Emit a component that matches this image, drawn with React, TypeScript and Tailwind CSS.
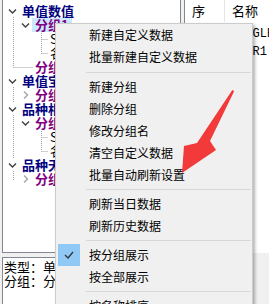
import React from "react";

const CJK = "font-['Noto_Sans_CJK_SC','Noto_Sans',sans-serif]";

function ChevDown() {
  return (
    <svg width="13" height="14" viewBox="0 0 13 14" className="shrink-0">
      <polyline points="3,5.5 6.5,9 10,5.5" fill="none" stroke="#404040" strokeWidth="1.4" />
    </svg>
  );
}

function ChevRight() {
  return (
    <svg width="13" height="14" viewBox="0 0 13 14" className="shrink-0">
      <polyline points="5,3.5 8.5,7 5,10.5" fill="none" stroke="#a6a6a6" strokeWidth="1.4" />
    </svg>
  );
}

type RowProps = {
  pad: string;
  chev?: "down" | "right";
  text: string;
  kind: "root" | "group" | "leaf";
  hl?: boolean;
};

function TreeRow({ pad, chev, text, kind, hl }: RowProps) {
  const color =
    kind === "root"
      ? "text-[#000080] font-bold text-[13px]"
      : kind === "group"
      ? "text-[#800080] font-bold text-[13px]"
      : "text-black text-[13px]";
  return (
    <div className={`flex h-[14px] items-center whitespace-nowrap ${pad}`}>
      {chev === "down" && <ChevDown />}
      {chev === "right" && <ChevRight />}
      <span className={`px-[3px] leading-[14px] ${color} ${hl ? "bg-[#cce8ff]" : ""}`}>{text}</span>
    </div>
  );
}

type MenuItem = { t?: string; sep?: string; checked?: boolean };

const items: MenuItem[] = [
  { t: "新建自定义数据" },
  { t: "批量新建自定义数据" },
  { sep: "h-[8px]" },
  { t: "新建分组" },
  { t: "删除分组" },
  { t: "修改分组名" },
  { t: "清空自定义数据" },
  { t: "批量自动刷新设置" },
  { sep: "h-[7px]" },
  { t: "刷新当日数据" },
  { t: "刷新历史数据" },
  { sep: "h-[7px]" },
  { t: "按分组展示", checked: true },
  { t: "按全部展示" },
  { sep: "h-[7px]" },
  { t: "按名称排序" },
];

export default function App() {
  return (
    <div className={`relative w-[269px] h-[304px] overflow-hidden bg-[#f0f0f0] ${CJK}`}>
      {/* top area */}
      <div className="flex h-[253px]">
        {/* tree panel */}
        <div className="ml-[2px] w-[179px] shrink-0 h-full border border-t-0 border-[#828790] bg-white pt-[4px]">
          <TreeRow pad="pl-[3px]" chev="down" text="单值数值" kind="root" />
          <TreeRow pad="pl-[16px]" chev="down" text="分组1" kind="group" hl />
          <TreeRow pad="pl-[44px]" text="SINGLE" kind="leaf" />
          <TreeRow pad="pl-[44px]" text="名称" kind="leaf" />
          <TreeRow pad="pl-[29px]" text="分组2" kind="group" />
          <TreeRow pad="pl-[3px]" chev="down" text="单值宝数" kind="root" />
          <TreeRow pad="pl-[16px]" chev="right" text="分组1" kind="group" />
          <TreeRow pad="pl-[3px]" chev="down" text="品种相关" kind="root" />
          <TreeRow pad="pl-[16px]" chev="down" text="分组1" kind="group" />
          <TreeRow pad="pl-[44px]" text="SINGLE" kind="leaf" />
          <TreeRow pad="pl-[44px]" text="名称" kind="leaf" />
          <TreeRow pad="pl-[3px]" chev="down" text="品种无关" kind="root" />
          <TreeRow pad="pl-[16px]" chev="right" text="分组1" kind="group" />
        </div>
        {/* table panel */}
        <div className="ml-[3px] flex-1 min-w-0 h-full overflow-hidden border-l border-[#828790] bg-white">
          <div className="flex h-[22px] text-[13px] text-black">
            <div className="w-[40px] shrink-0 border-r border-[#e5e5e5] pl-[7px] leading-[22px]">序</div>
            <div className="pl-[7px] leading-[22px] whitespace-nowrap">名称</div>
          </div>
          <div className="pt-[3px] font-['Liberation_Mono',monospace] text-[12px] text-black">
            <div className="flex h-[18px] items-center">
              <div className="w-[40px] shrink-0" />
              <div className="pl-[6px] whitespace-nowrap">SINGLEI</div>
            </div>
            <div className="flex h-[18px] items-center">
              <div className="w-[40px] shrink-0" />
              <div className="pl-[6px] whitespace-nowrap">NUMR1</div>
            </div>
          </div>
        </div>
      </div>
      {/* info panel */}
      <div className="mt-[4px] ml-[2px] w-[179px] h-[60px] border border-[#828790] bg-white pl-[1px] pt-[2px] text-[13px] leading-[14px] text-black whitespace-nowrap">
        <div>类型：单值数值</div>
        <div>分组：分组1</div>
      </div>

      {/* tree dotted lines */}
      <svg className="absolute left-0 top-0 pointer-events-none" width="180" height="200" viewBox="0 0 180 200">
        <g stroke="#a0a0a0" strokeWidth="1" strokeDasharray="1 1" fill="none">
          <line x1="13.5" y1="17" x2="13.5" y2="67.5" />
          <line x1="13.5" y1="67.5" x2="33" y2="67.5" />
          <line x1="41.5" y1="31" x2="41.5" y2="53.5" />
          <line x1="41.5" y1="39.5" x2="48" y2="39.5" />
          <line x1="41.5" y1="53.5" x2="48" y2="53.5" />
          <line x1="13.5" y1="87" x2="13.5" y2="103" />
          <line x1="13.5" y1="115" x2="13.5" y2="159" />
          <line x1="41.5" y1="129" x2="41.5" y2="151.5" />
          <line x1="41.5" y1="137.5" x2="48" y2="137.5" />
          <line x1="41.5" y1="151.5" x2="48" y2="151.5" />
          <line x1="13.5" y1="171" x2="13.5" y2="180" />
        </g>
      </svg>

      {/* context menu */}
      <div className="absolute left-[55px] top-[23px] w-[198px] border border-[#cccccc] bg-[#f0f0f0] shadow-[2px_2px_3px_rgba(0,0,0,0.3)]">
        {items.map((it, i) =>
          it.sep ? (
            <div key={i} className={`flex items-center ${it.sep}`}>
              <div className="ml-[30px] mr-[1px] h-px flex-1 bg-[#d7d7d7]" />
            </div>
          ) : (
            <div key={i} className="flex h-[22px] items-center">
              <div className={`ml-[2px] flex h-[22px] w-[22px] shrink-0 items-center justify-center ${it.checked ? "bg-[#90c8f6]" : ""}`}>
                {it.checked && (
                  <svg width="10" height="8" viewBox="0 0 10 8">
                    <polyline points="1,4 4,7 9,1" fill="none" stroke="#333" strokeWidth="1.3" />
                  </svg>
                )}
              </div>
              <div className="ml-[9px] text-[12px] leading-[22px] text-black whitespace-nowrap">{it.t}</div>
            </div>
          )
        )}
      </div>

      {/* red annotation arrow */}
      <svg className="absolute left-0 top-0 pointer-events-none" width="269" height="304" viewBox="0 0 269 304">
        <polygon
          points="233,90 234,91.5 210,141 216,150 182,173 184,146 197,143 232,90.5"
          fill="#f23a3a"
        />
      </svg>
    </div>
  );
}
